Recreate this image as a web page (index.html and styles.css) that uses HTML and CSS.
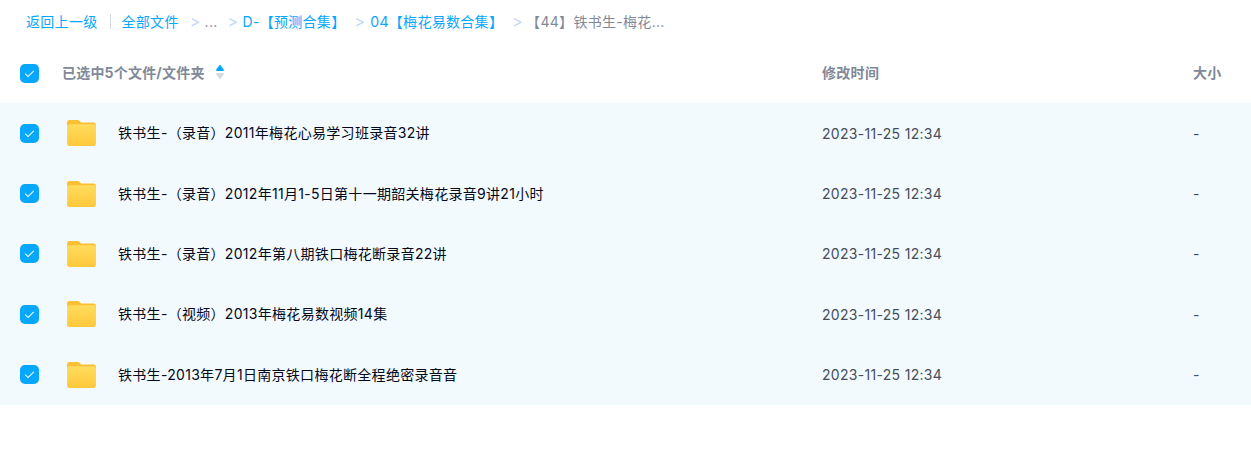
FILE: index.html

```html
<!DOCTYPE html>
<html lang="zh-CN">
<head>
    <meta charset="UTF-8">
    <meta name="viewport" content="width=device-width, initial-scale=1.0">
    <title>文件列表</title>
    <link rel="stylesheet" href="styles.css">
</head>
<body>

<svg class="defs" width="0" height="0">
    <defs>
        <linearGradient id="folderFill" x1="0" y1="0" x2="0" y2="1">
            <stop offset="0" stop-color="#ffdc5e"/>
            <stop offset="1" stop-color="#ffc83a"/>
        </linearGradient>
    </defs>
</svg>

<nav class="crumbs">
    <a class="crumb back">返回上一级</a>
    <span class="divider"></span>
    <a class="crumb">全部文件</a>
    <span class="sep sep-first">&gt;</span>
    <span class="crumb-more">...</span>
    <span class="sep sep-second">&gt;</span>
    <a class="crumb">D-【预测合集】</a>
    <span class="sep sep-third">&gt;</span>
    <a class="crumb">04【梅花易数合集】</a>
    <span class="sep sep-fourth">&gt;</span>
    <span class="crumb-current">【44】铁书生-梅花...</span>
</nav>

<div class="list-head">
    <span class="check"><svg viewBox="0 0 20 20"><path d="M5.5 10.2l3 3 6-6"/></svg></span>
    <div class="col-name head-name">
        <span>已选中5个文件/文件夹</span>
        <svg class="sort" viewBox="0 0 10 16"><path class="up" d="M5 .5L8.600 5.200Q9.500 7 7.500 7h-5Q.5 7 1.400 5.200z"/><path class="down" d="M5 15.500L8.600 10.800Q9.500 9 7.500 9h-5Q.5 9 1.400 10.800z"/></svg>
    </div>
    <div class="col-time">修改时间</div>
    <div class="col-size">大小</div>
</div>

<div class="rows">
    <div class="row">
        <span class="check"><svg viewBox="0 0 20 20"><path d="M5.5 10.2l3 3 6-6"/></svg></span>
        <svg class="folder" viewBox="0 0 30 27"><path class="folder-back" d="M2.500 0h8.200c1 0 1.700.4 2.400 1l1.600 1.500h13c1.300 0 2.300 1 2.300 2.300V10H0V2.500C0 1.100 1.100 0 2.500 0z"/><path class="folder-front" d="M2 4.300h26c1.100 0 2 .9 2 2V24.500c0 1.400-1.100 2.500-2.500 2.500h-25C1.100 27 0 25.900 0 24.500V6.300c0-1.100.9-2 2-2z"/></svg>
        <div class="file-name">铁书生-（录音）2011年梅花心易学习班录音32讲</div>
        <div class="col-time">2023-11-25 12:34</div>
        <div class="col-size">-</div>
    </div>
    <div class="row">
        <span class="check"><svg viewBox="0 0 20 20"><path d="M5.5 10.2l3 3 6-6"/></svg></span>
        <svg class="folder" viewBox="0 0 30 27"><path class="folder-back" d="M2.500 0h8.200c1 0 1.700.4 2.400 1l1.600 1.500h13c1.300 0 2.300 1 2.300 2.300V10H0V2.500C0 1.100 1.100 0 2.500 0z"/><path class="folder-front" d="M2 4.300h26c1.100 0 2 .9 2 2V24.500c0 1.400-1.100 2.500-2.500 2.500h-25C1.100 27 0 25.900 0 24.500V6.300c0-1.100.9-2 2-2z"/></svg>
        <div class="file-name">铁书生-（录音）2012年11月1-5日第十一期韶关梅花录音9讲21小时</div>
        <div class="col-time">2023-11-25 12:34</div>
        <div class="col-size">-</div>
    </div>
    <div class="row">
        <span class="check"><svg viewBox="0 0 20 20"><path d="M5.5 10.2l3 3 6-6"/></svg></span>
        <svg class="folder" viewBox="0 0 30 27"><path class="folder-back" d="M2.500 0h8.200c1 0 1.700.4 2.400 1l1.600 1.500h13c1.300 0 2.300 1 2.300 2.300V10H0V2.500C0 1.100 1.100 0 2.500 0z"/><path class="folder-front" d="M2 4.300h26c1.100 0 2 .9 2 2V24.500c0 1.400-1.100 2.500-2.500 2.500h-25C1.100 27 0 25.900 0 24.500V6.300c0-1.100.9-2 2-2z"/></svg>
        <div class="file-name">铁书生-（录音）2012年第八期铁口梅花断录音22讲</div>
        <div class="col-time">2023-11-25 12:34</div>
        <div class="col-size">-</div>
    </div>
    <div class="row">
        <span class="check"><svg viewBox="0 0 20 20"><path d="M5.5 10.2l3 3 6-6"/></svg></span>
        <svg class="folder" viewBox="0 0 30 27"><path class="folder-back" d="M2.500 0h8.200c1 0 1.700.4 2.400 1l1.600 1.500h13c1.300 0 2.300 1 2.300 2.300V10H0V2.500C0 1.100 1.100 0 2.500 0z"/><path class="folder-front" d="M2 4.300h26c1.100 0 2 .9 2 2V24.500c0 1.400-1.100 2.500-2.500 2.500h-25C1.100 27 0 25.900 0 24.500V6.300c0-1.100.9-2 2-2z"/></svg>
        <div class="file-name">铁书生-（视频）2013年梅花易数视频14集</div>
        <div class="col-time">2023-11-25 12:34</div>
        <div class="col-size">-</div>
    </div>
    <div class="row">
        <span class="check"><svg viewBox="0 0 20 20"><path d="M5.5 10.2l3 3 6-6"/></svg></span>
        <svg class="folder" viewBox="0 0 30 27"><path class="folder-back" d="M2.500 0h8.200c1 0 1.700.4 2.400 1l1.600 1.500h13c1.300 0 2.300 1 2.300 2.300V10H0V2.500C0 1.100 1.100 0 2.500 0z"/><path class="folder-front" d="M2 4.300h26c1.100 0 2 .9 2 2V24.500c0 1.400-1.100 2.500-2.500 2.500h-25C1.100 27 0 25.900 0 24.500V6.300c0-1.100.9-2 2-2z"/></svg>
        <div class="file-name">铁书生-2013年7月1日南京铁口梅花断全程绝密录音音</div>
        <div class="col-time">2023-11-25 12:34</div>
        <div class="col-size">-</div>
    </div>
</div>

</body>
</html>
```

FILE: styles.css

```css
body {
    font-family: Inter, "Noto Sans CJK SC", sans-serif;
    font-size: 14px;
    letter-spacing: 0.3px;
    color: #03081a;
    background-color: white;
    margin: 0;
}

.defs {
    display: block;
    height: 0;
}

.crumbs {
    display: flex;
    align-items: center;
    height: 42px;
    padding-left: 26px;
    padding-bottom: 1px;
    box-sizing: content-box;
    white-space: nowrap;
}

.crumb {
    color: #06a7ff;
}

.divider {
    width: 1px;
    height: 15px;
    margin: 0 11px 0 12px;
    background-color: #d3d9e2;
}

.sep {
    margin: 0 4px 0 14px;
    color: #c4d8f4;
    font-size: 16px;
    line-height: 16px;
}

.sep-first {
    margin-left: 11px;
}

.sep-second {
    margin-left: 10px;
}

.sep-third {
    margin-left: 9px;
    margin-right: 5px;
}

.sep-fourth {
    margin-left: 9px;
    margin-right: 3px;
}

.crumb-more {
    color: #818999;
}

.crumb-current {
    color: #818999;
}

.list-head {
    display: flex;
    align-items: center;
    height: 60px;
    color: #818999;
    font-weight: 700;
}

.list-head > div {
    position: relative;
    top: -1px;
}

.check {
    flex: none;
    width: 19px;
    height: 19px;
    margin-left: 20px;
    border-radius: 5px;
    background-color: #06a7ff;
}

.check svg {
    display: block;
    width: 19px;
    height: 19px;
    fill: none;
    stroke: white;
    stroke-width: 1.1;
}

.head-name {
    display: flex;
    align-items: center;
    flex: none;
    width: 760px;
    margin-left: 23px;
    letter-spacing: 0.2px;
}

.sort {
    width: 10px;
    height: 16px;
    margin-left: 10px;
}

.sort .up {
    fill: #06a7ff;
}

.sort .down {
    fill: #d5d9e0;
}

.col-time {
    flex: none;
    width: 371px;
}

.col-size {
    flex: none;
}

.rows {
    background-color: #f2fafe;
}

.row {
    display: flex;
    align-items: center;
    height: 60.4px;
}

.folder {
    flex: none;
    width: 29px;
    height: 26px;
    margin-left: 28px;
}

.folder-back {
    fill: #fbbf33;
}

.folder-front {
    fill: url(#folderFill);
}

.file-name {
    flex: none;
    width: 704px;
    margin-left: 22px;
    margin-top: -2px;
    white-space: nowrap;
}

.row .col-time {
    color: #454d5a;
}

.row .col-size {
    color: #454d5a;
}
```
